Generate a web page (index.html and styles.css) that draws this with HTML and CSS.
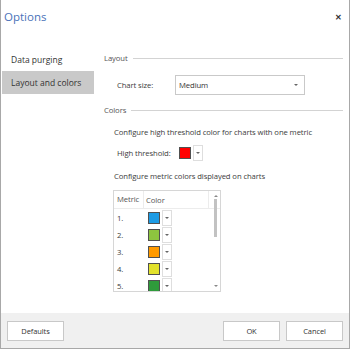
FILE: index.html
```html
<!DOCTYPE html>
<html lang="en">
<head>
    <meta charset="UTF-8">
    <title>Options</title>
    <link rel="stylesheet" href="styles.css">
</head>
<body>

<div class="window">
    <div class="titlebar">
        <span class="title">Options</span>
        <span class="close">&#x2715;</span>
    </div>

    <div class="main">
        <ul class="nav">
            <li class="nav-item">Data purging</li>
            <li class="nav-item selected">Layout and colors</li>
        </ul>

        <div class="content">
            <div class="section-head"><span>Layout</span><div class="rule"></div></div>

            <div class="field chart-size">
                <label class="label-size">Chart size:</label>
                <div class="select">
                    <span>Medium</span>
                    <span class="arrow"></span>
                </div>
            </div>

            <div class="section-head colors-head"><span>Colors</span><div class="rule"></div></div>

            <p class="note">Configure high threshold color for charts with one metric</p>

            <div class="field threshold">
                <label class="label-threshold">High threshold:</label>
                <div class="picker">
                    <span class="swatch-cell"><span class="swatch red"></span></span>
                    <span class="picker-arrow"><span class="arrow"></span></span>
                </div>
            </div>

            <p class="note metric-note">Configure metric colors displayed on charts</p>

            <div class="grid">
                <div class="grid-head">
                    <span class="col-metric">Metric</span>
                    <span class="col-color">Color</span>
                    <span class="col-rest"></span>
                </div>
                <div class="grid-row"><span class="col-metric">1.</span><span class="col-color"><span class="picker"><span class="swatch-cell"><span class="swatch blue"></span></span><span class="picker-arrow"><span class="arrow"></span></span></span></span></div>
                <div class="grid-row"><span class="col-metric">2.</span><span class="col-color"><span class="picker"><span class="swatch-cell"><span class="swatch lime"></span></span><span class="picker-arrow"><span class="arrow"></span></span></span></span></div>
                <div class="grid-row"><span class="col-metric">3.</span><span class="col-color"><span class="picker"><span class="swatch-cell"><span class="swatch orange"></span></span><span class="picker-arrow"><span class="arrow"></span></span></span></span></div>
                <div class="grid-row"><span class="col-metric">4.</span><span class="col-color"><span class="picker"><span class="swatch-cell"><span class="swatch yellow"></span></span><span class="picker-arrow"><span class="arrow"></span></span></span></span></div>
                <div class="grid-row"><span class="col-metric">5.</span><span class="col-color"><span class="picker"><span class="swatch-cell"><span class="swatch green"></span></span><span class="picker-arrow"><span class="arrow"></span></span></span></span></div>

                <div class="scrollbar">
                    <span class="arrow up"></span>
                    <span class="thumb"></span>
                    <span class="arrow down"></span>
                </div>
            </div>
        </div>
    </div>

    <div class="footer">
        <button class="btn">Defaults</button>
        <div class="spacer"></div>
        <button class="btn">OK</button>
        <button class="btn">Cancel</button>
    </div>
</div>

</body>
</html>
```

FILE: styles.css
```css
body {
    margin: 0;
    font-family: "Open Sans", "Noto Sans", sans-serif;
    font-size: 7.7px;
    letter-spacing: -0.1px;
    color: #3c3c3c;
    background: white;
    white-space: nowrap;
}
.window {
    width: 350px;
    height: 349px;
    box-sizing: border-box;
    border: 1px solid #a8a8a8;
    border-top: none;
    display: flex;
    flex-direction: column;
}
.titlebar {
    height: 34px;
    display: flex;
    align-items: center;
    justify-content: space-between;
    padding: 0 7px 0 3px;
}
.title {
    font-size: 11.5px;
    letter-spacing: 0;
    color: #4a72b8;
    margin-top: -2px;
}
.close {
    font-size: 8px;
    font-weight: bold;
    color: #333;
    margin-top: -2px;
}
.main {
    flex: 1;
    display: flex;
}
.nav {
    list-style: none;
    margin: 0;
    padding: 14px 0 0 1px;
    width: 92px;
}
.nav-item {
    height: 23px;
    line-height: 23px;
    padding-left: 9px;
    font-size: 8.5px;
    letter-spacing: 0;
    color: #333;
}
.nav-item.selected {
    background: #c9c9c9;
}
.content {
    flex: 1;
    padding: 16px 6px 0 10px;
}
.section-head {
    display: flex;
    align-items: center;
    height: 16px;
    color: #555;
}
.rule {
    flex: 1;
    height: 1px;
    background: #d3d3d3;
    margin-left: 5px;
}
.colors-head {
    margin-top: 7px;
}
.field {
    display: flex;
    align-items: center;
    padding-left: 13px;
}
.chart-size {
    margin-top: 9px;
}
.label-size {
    width: 58px;
}
.select {
    width: 130px;
    height: 20px;
    box-sizing: border-box;
    border: 1px solid #c9c9c9;
    display: flex;
    align-items: center;
    justify-content: space-between;
    padding: 0 6px 0 3px;
    color: #333;
}
.arrow {
    width: 0;
    height: 0;
    border-left: 2px solid transparent;
    border-right: 2px solid transparent;
    border-top: 2px solid #666;
}
.note {
    margin: 6px 0 0 0;
    padding-left: 10px;
    line-height: 16px;
}
.threshold {
    margin-top: 5px;
}
.label-threshold {
    width: 61px;
}
.picker {
    display: inline-flex;
    height: 16px;
}
.swatch-cell {
    width: 14px;
    display: flex;
    align-items: center;
    justify-content: center;
}
.swatch {
    width: 10px;
    height: 10px;
    border: 1px solid #505050;
}
.picker-arrow {
    width: 10px;
    box-sizing: border-box;
    border: 1px solid #dedede;
    display: flex;
    align-items: center;
    justify-content: center;
    margin-left: 1px;
}
.red { background: #ff0000; }
.blue { background: #1d9be4; }
.lime { background: #8dc43f; }
.orange { background: #ff9a00; }
.yellow { background: #e2e22c; }
.green { background: #2f9b3b; }
.metric-note {
    margin-top: 7px;
}
.grid {
    position: relative;
    margin: 6px 0 0 9px;
    width: 108px;
    height: 102px;
    box-sizing: border-box;
    border: 1px solid #d6d6d6;
    overflow: hidden;
}
.grid-head, .grid-row {
    display: flex;
    align-items: center;
}
.grid-head {
    height: 17px;
    border-bottom: 1px solid #ececec;
    color: #555;
}
.grid-row {
    height: 17px;
}
.col-metric {
    width: 30px;
    padding-left: 3px;
    box-sizing: border-box;
}
.grid-head .col-metric {
    height: 17px;
    line-height: 17px;
    border-right: 1px solid #ececec;
}
.col-color {
    width: 64px;
    padding-left: 2px;
    box-sizing: border-box;
}
.grid-row .col-color {
    padding-left: 3px;
}
.grid-head .col-rest {
    height: 17px;
    border-left: 1px solid #ececec;
}
.scrollbar {
    position: absolute;
    top: 0;
    right: 0;
    width: 9px;
    height: 100px;
    display: flex;
    flex-direction: column;
    align-items: center;
}
.scrollbar .arrow.up {
    margin-top: 4px;
    border-top: none;
    border-bottom: 2px solid #888;
}
.thumb {
    width: 3px;
    height: 38px;
    margin-top: 2px;
    background: #c2c2c2;
}
.scrollbar .arrow.down {
    margin-top: auto;
    margin-bottom: 4px;
    border-top-color: #888;
}
.footer {
    height: 35px;
    background: #f0f0f0;
    display: flex;
    align-items: flex-start;
    padding: 8px 6px 0 6px;
    box-sizing: border-box;
    gap: 6px;
}
.spacer {
    flex: 1;
}
.btn {
    width: 57px;
    height: 20px;
    background: white;
    border: 1px solid #c8c8c8;
    font-family: "Open Sans", "Noto Sans", sans-serif;
    font-size: 7.5px;
    letter-spacing: -0.1px;
    color: #333;
    padding: 0;
}
```
